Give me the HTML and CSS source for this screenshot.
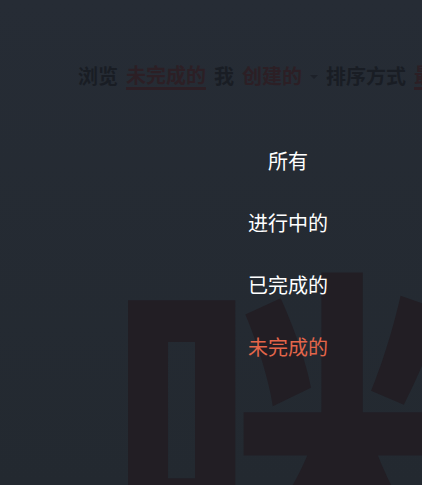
FILE: index.html
```html
<!DOCTYPE html>
<html lang="zh">
<head>
<meta charset="utf-8">
<title>浏览</title>
<link rel="stylesheet" href="styles.css">
</head>
<body>
<div class="page">
  <div class="filter-bar">
    <span class="word">浏览</span>
    <span class="pick underlined">未完成的</span>
    <span class="word">我</span>
    <span class="pick">创建的</span>
    <span class="caret"></span>
    <span class="word">排序方式</span>
    <span class="pick underlined">最新的</span>
  </div>
  <div class="watermark">咪</div>
</div>
<div class="overlay">
  <ul class="menu">
    <li class="menu-item">所有</li>
    <li class="menu-item">进行中的</li>
    <li class="menu-item">已完成的</li>
    <li class="menu-item active">未完成的</li>
  </ul>
</div>
</body>
</html>
```
FILE: styles.css
```css
html, body {
  margin: 0;
  padding: 0;
}
body {
  width: 422px;
  height: 485px;
  overflow: hidden;
  background: linear-gradient(#262c35, #232930);
  font-family: "Noto Sans CJK SC", "Noto Sans", sans-serif;
  position: relative;
}
.page {
  position: relative;
  height: 485px;
  overflow: hidden;
}
.filter-bar {
  padding: 62px 0 0 78px;
  font-size: 20px;
  font-weight: 700;
  line-height: 28px;
  white-space: nowrap;
  color: #191d24;
  display: flex;
  align-items: center;
  gap: 8px;
}
.pick {
  color: #2c1f25;
}
.underlined {
  border-bottom: 3px solid #2c1f25;
  line-height: 25px;
}
.caret {
  width: 0;
  height: 0;
  border-left: 4px solid transparent;
  border-right: 4px solid transparent;
  border-top: 4px solid #1d2129;
  margin-top: 2px;
}
.watermark {
  position: absolute;
  left: 105px;
  top: 239px;
  font-size: 360px;
  font-weight: 700;
  line-height: 1;
  color: #221e24;
  transform: scaleY(1.07);
  transform-origin: top left;
  z-index: 0;
}
.overlay {
  position: absolute;
  inset: 0;
  z-index: 2;
}
.menu {
  list-style: none;
  margin: 0;
  padding: 130px 0 0 0;
  width: 576px;
  display: flex;
  flex-direction: column;
  align-items: center;
}
.menu-item {
  font-size: 20px;
  line-height: 62px;
  height: 62px;
  color: #ffffff;
}
.menu-item.active {
  color: #e4664a;
}
```
